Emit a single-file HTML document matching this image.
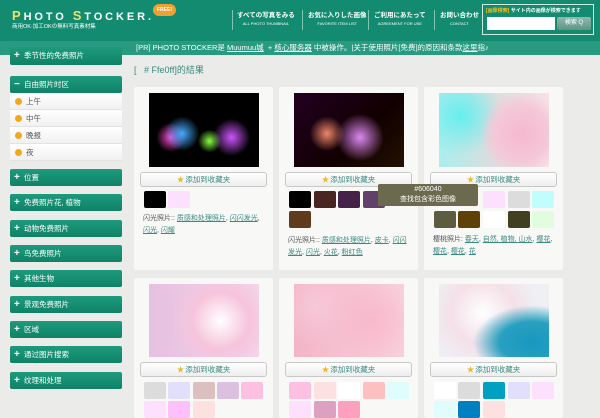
<!DOCTYPE html>
<html><head><meta charset="utf-8"><style>
*{margin:0;padding:0;box-sizing:border-box}
body{width:600px;height:413px;overflow:hidden;background:#ebebe9;font-family:"Liberation Sans","Noto Sans CJK SC",sans-serif;position:relative;font-size:8px}
.a{position:absolute}
#hd{left:0;top:0;width:600px;height:41px;background:#138b70}
#bar{left:0;top:41px;width:600px;height:14px;background:#279a7f;color:#fff;font-size:7.5px;line-height:14px}
.nav{top:9px;color:#fff;font-size:6.5px;font-weight:bold;text-align:center}
.nav small{display:block;font-size:4px;font-weight:normal;margin-top:2px}
.sep{top:10px;width:1px;height:20px;background:#7cc6b3}
.sb{left:10px;width:112px;height:17px;background:linear-gradient(#1e9a7d,#0f8266);color:#fff;font-size:7.5px;line-height:17px;padding-left:14px;border-radius:2px}
.sb:before{content:"+";position:absolute;left:4px;top:0;font-weight:bold;font-size:10px}
.sb.m:before{content:"−"}
.sub{left:10px;width:112px;height:17px;background:linear-gradient(#fff,#f1f1f1);border-bottom:1px solid #e2e2e2;font-size:7.5px;line-height:17px;padding-left:16px;color:#555}
.sub:before{content:"";position:absolute;left:5px;top:5px;width:7px;height:7px;border-radius:50%;background:#f0a81e}
.card{width:139px;background:#f8f8f7;border-radius:2px}
.img{width:110px;height:74px}
.btn{width:127px;height:15px;border:1px solid #c8c8c8;border-radius:3px;background:linear-gradient(#fff,#eee);font-size:7.5px;color:#3b8a80;text-align:center;line-height:13px}
.btn:before{content:"★";color:#f0b820;margin-right:1px}
.sw{width:22px;height:17px;border-radius:2px}
.tx{font-size:7px;color:#555;line-height:12px;width:125px}
.tx u{color:#3b8a80}
</style></head><body>
<div class="a" id="hd"></div>
<div class="a" style="left:12px;top:8px;color:#fff;font-size:11px;letter-spacing:2.9px;font-weight:bold;white-space:nowrap"><span style="color:#e8e070;font-size:13px">P</span>HOTO <span style="color:#e8e070;font-size:13px">S</span>TOCKER.</div>
<div class="a" style="left:153px;top:4px;width:23px;height:12px;border-radius:6px;background:#f0a030;color:#fff;font-size:5px;text-align:center;line-height:12px;font-weight:bold">FREE!</div>
<div class="a" style="left:12px;top:22px;color:#fff;font-size:5.5px">商用OK·加工OKの無料写真素材集</div>
<div class="a sep" style="left:232px"></div><div class="a nav" style="left:237px">すべての写真をみる<small>ALL PHOTO THUMBNAIL</small></div>
<div class="a sep" style="left:302px"></div><div class="a nav" style="left:308px">お気に入りした画像<small>FAVORITE ITEM LIST</small></div>
<div class="a sep" style="left:368px"></div><div class="a nav" style="left:374px">ご利用にあたって<small>AGREEMENT FOR USE</small></div>
<div class="a sep" style="left:434px"></div><div class="a nav" style="left:440px">お問い合わせ<small>CONTACT</small></div>
<div class="a" style="left:482px;top:4px;width:112px;height:31px;border:1.5px solid #cde9e0"></div>
<div class="a" style="left:486px;top:7px;color:#fff;font-size:5px;font-weight:bold"><span style="color:#f0c020">[画像検索]</span> サイト内の画像が検索できます</div>
<div class="a" style="left:487px;top:17px;width:68px;height:13px;background:#fff"></div>
<div class="a" style="left:557px;top:17px;width:34px;height:13px;background:linear-gradient(#8fb9ae,#5f9486);color:#fff;font-size:6px;line-height:13px;text-align:center;border-radius:2px">検索 Q</div>
<div class="a" id="bar"><span style="position:absolute;left:136px">[PR] PHOTO STOCKER是 <u>Muumuu城</u> &nbsp;+ <u>核心服务器</u> 中被操作。|关于使用照片[免费]的原因和条款<u>这里</u>指♪</span></div>
<div class="a" style="left:134px;top:63px;color:#3b8a80;font-size:9px">[ &nbsp;&nbsp;# Ffe0ff]的結果</div>
<div class="a sb" style="top:47px;height:18px">季节性的免费照片</div>
<div class="a sb m" style="top:76px">自由照片时区</div>
<div class="a sub" style="top:93px">上午</div>
<div class="a sub" style="top:110px">中午</div>
<div class="a sub" style="top:127px">晚报</div>
<div class="a sub" style="top:144px">夜</div>
<div class="a sb" style="top:169px">位置</div>
<div class="a sb" style="top:194px">免费照片花, 植物</div>
<div class="a sb" style="top:220px">动物免费照片</div>
<div class="a sb" style="top:245px">鸟免费照片</div>
<div class="a sb" style="top:270px">其他生物</div>
<div class="a sb" style="top:296px">景观免费照片</div>
<div class="a sb" style="top:321px">区域</div>
<div class="a sb" style="top:346px">通过图片搜索</div>
<div class="a sb" style="top:372px">纹理和处理</div>

<div class="a card" style="left:134px;top:87px;height:183px"></div>
<div class="a card" style="left:279px;top:87px;height:183px"></div>
<div class="a card" style="left:424px;top:87px;height:183px"></div>
<div class="a card" style="left:134px;top:278px;height:140px"></div>
<div class="a card" style="left:279px;top:278px;height:140px"></div>
<div class="a card" style="left:424px;top:278px;height:140px"></div>

<div class="a img" style="left:149px;top:93px;background:radial-gradient(circle at 30% 55%,#4af 0,transparent 20%),radial-gradient(circle at 55% 65%,#8f4 0,transparent 15%),radial-gradient(circle at 75% 60%,#c5f 0,transparent 20%),radial-gradient(circle at 20% 60%,#f4c 0,transparent 15%),#000"></div>
<div class="a img" style="left:294px;top:93px;background:radial-gradient(circle at 30% 55%,#e86 0,transparent 20%),radial-gradient(circle at 60% 60%,#d8e 0,transparent 30%),linear-gradient(135deg,#202 ,#100 60%,#210)"></div>
<div class="a img" style="left:439px;top:93px;background:radial-gradient(circle at 75% 55%,#f6b8cf 0,#f4c8d8 30%,transparent 45%),radial-gradient(circle at 20% 30%,#6ee 0,transparent 40%),linear-gradient(90deg,#aee 0,#ddd 50%,#f8e0e8)"></div>
<div class="a img" style="left:149px;top:284px;height:73px;background:radial-gradient(circle at 65% 50%,#fff 0,#f6c4dc 35%,transparent 60%),linear-gradient(90deg,#e6c0e0,#f4d4e8)"></div>
<div class="a img" style="left:294px;top:284px;height:73px;background:radial-gradient(circle at 70% 50%,#f8b8cc 0,transparent 50%),radial-gradient(circle at 20% 30%,#f6c8d8 0,transparent 40%),linear-gradient(90deg,#f4b4c8,#f8d0dc)"></div>
<div class="a img" style="left:439px;top:284px;height:73px;background:radial-gradient(ellipse at 85% 80%,#1898c0 0,#28a0c0 25%,transparent 45%),radial-gradient(circle at 40% 40%,#fff 0,#f4e0e8 40%,transparent 70%),#eef0f4"></div>

<div class="a btn" style="left:140px;top:172px">添加到收藏夹</div>
<div class="a btn" style="left:285px;top:172px">添加到收藏夹</div>
<div class="a btn" style="left:430px;top:172px">添加到收藏夹</div>
<div class="a btn" style="left:140px;top:362px">添加到收藏夹</div>
<div class="a btn" style="left:285px;top:362px">添加到收藏夹</div>
<div class="a btn" style="left:430px;top:362px">添加到收藏夹</div>

<div class="a sw" style="left:144px;top:191px;background:#000"></div>
<div class="a sw" style="left:168px;top:191px;background:#fde0fd"></div>
<div class="a tx" style="left:143px;top:213px">闪光照片:: <u>质感和处理照片</u>, <u>闪闪发光</u>, <u>闪光</u>, <u>闪耀</u></div>

<div class="a sw" style="left:289px;top:191px;background:#000"></div>
<div class="a sw" style="left:314px;top:191px;background:#4a2622"></div>
<div class="a sw" style="left:338px;top:191px;background:#452248"></div>
<div class="a sw" style="left:363px;top:191px;background:#62406a"></div>
<div class="a sw" style="left:289px;top:211px;background:#603a1c"></div>
<div class="a tx" style="left:288px;top:235px">闪光照片:: <u>质感和处理照片</u>, <u>皮卡</u>, <u>闪闪发光</u>, <u>闪光</u>, <u>火花</u>, <u>粉红色</u></div>

<div class="a sw" style="left:483px;top:191px;background:#fde0fd"></div>
<div class="a sw" style="left:508px;top:191px;background:#dcdcdc"></div>
<div class="a sw" style="left:532px;top:191px;background:#c0fdfd"></div>
<div class="a sw" style="left:434px;top:211px;background:#5d5c40"></div>
<div class="a sw" style="left:458px;top:211px;background:#5e4008"></div>
<div class="a sw" style="left:483px;top:211px;background:#fff"></div>
<div class="a sw" style="left:508px;top:211px;background:#404020"></div>
<div class="a sw" style="left:532px;top:211px;background:#e0fde0"></div>
<div class="a tx" style="left:433px;top:234px">樱桃照片: <u>春天</u>, <u>自然, 植物, 山水</u>, <u>樱花</u>, <u>樱花</u>, <u>樱花</u>, <u>花</u></div>

<div class="a" style="left:378px;top:184px;width:100px;height:22px;background:#6b6a4e;color:#fff;font-size:7px;text-align:center;line-height:10px;padding-top:1px;border-radius:2px">#606040<br>查找包含彩色图像</div>

<div class="a sw" style="left:144px;top:382px;background:#dcdcdc"></div>
<div class="a sw" style="left:168px;top:382px;background:#e0e0fd"></div>
<div class="a sw" style="left:193px;top:382px;background:#dcc0c0"></div>
<div class="a sw" style="left:217px;top:382px;background:#dcc0e0"></div>
<div class="a sw" style="left:241px;top:382px;background:#fdc0e0"></div>
<div class="a sw" style="left:144px;top:401px;background:#fde0fd"></div>
<div class="a sw" style="left:168px;top:401px;background:#fdc0fd"></div>
<div class="a sw" style="left:193px;top:401px;background:#fde0e0"></div>

<div class="a sw" style="left:289px;top:382px;background:#fdc0e0"></div>
<div class="a sw" style="left:314px;top:382px;background:#fde0e0"></div>
<div class="a sw" style="left:338px;top:382px;background:#fff"></div>
<div class="a sw" style="left:363px;top:382px;background:#fdc0c0"></div>
<div class="a sw" style="left:387px;top:382px;background:#e0fdfd"></div>
<div class="a sw" style="left:289px;top:401px;background:#fde0fd"></div>
<div class="a sw" style="left:314px;top:401px;background:#dca0c0"></div>
<div class="a sw" style="left:338px;top:401px;background:#fda0c0"></div>

<div class="a sw" style="left:434px;top:382px;background:#fff"></div>
<div class="a sw" style="left:458px;top:382px;background:#dcdcdc"></div>
<div class="a sw" style="left:483px;top:382px;background:#00a0c0"></div>
<div class="a sw" style="left:508px;top:382px;background:#e0e0fd"></div>
<div class="a sw" style="left:532px;top:382px;background:#fde0fd"></div>
<div class="a sw" style="left:434px;top:401px;background:#e0fdfd"></div>
<div class="a sw" style="left:458px;top:401px;background:#0080c0"></div>
<div class="a sw" style="left:483px;top:401px;background:#fde0e0"></div>
</body></html>
